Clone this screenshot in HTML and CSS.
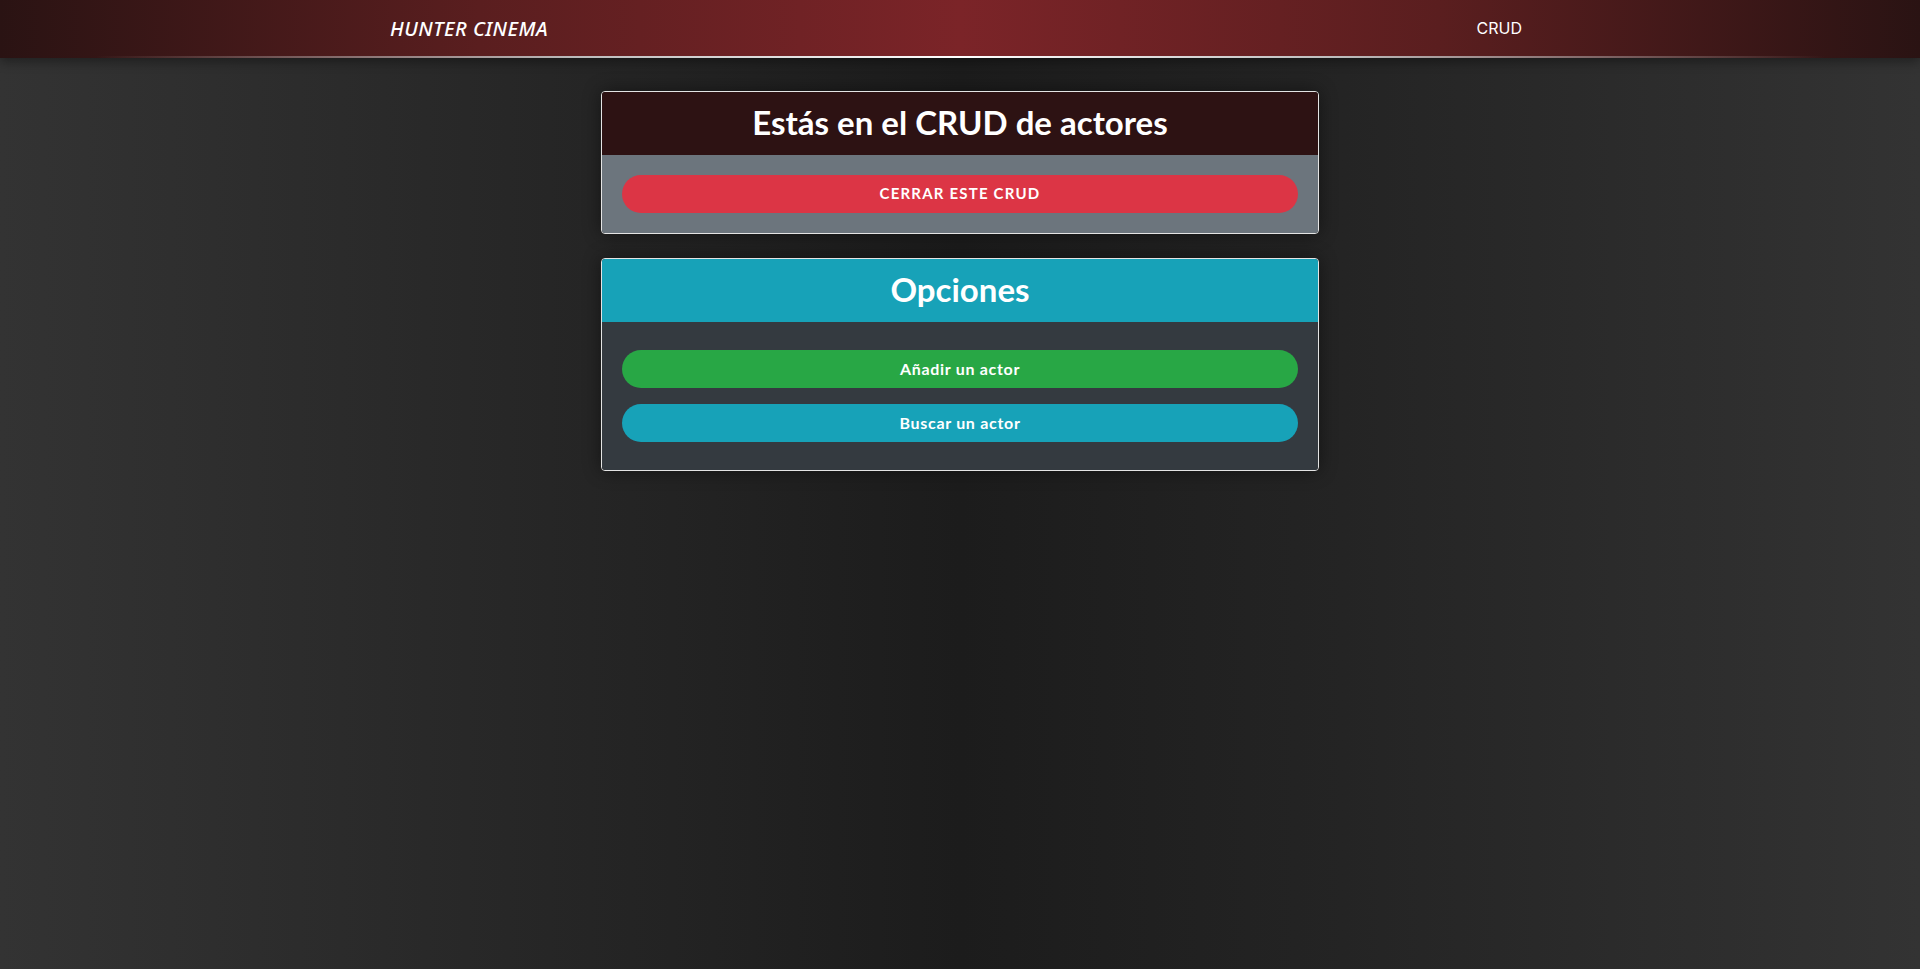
FILE: index.html
```html
<!DOCTYPE html>
<html lang="es">
<head>
<meta charset="utf-8">
<title>Hunter Cinema - CRUD de actores</title>
<link rel="stylesheet" href="styles.css">
</head>
<body>
<header class="navbar">
  <div class="nav-inner">
    <a class="brand" href="#">HUNTER CINEMA</a>
    <a class="nav-link" href="#">CRUD</a>
  </div>
</header>
<main class="content">
  <section class="card card-crud">
    <div class="card-header"><h2 class="card-title">Estás en el CRUD de actores</h2></div>
    <div class="card-body">
      <button class="btn btn-danger btn-upper">Cerrar este CRUD</button>
    </div>
  </section>
  <section class="card card-options">
    <div class="card-header"><h2 class="card-title">Opciones</h2></div>
    <div class="card-body card-body-list">
      <button class="btn btn-success">Añadir un actor</button>
      <button class="btn btn-info">Buscar un actor</button>
    </div>
  </section>
</main>
</body>
</html>
```

FILE: styles.css
```css
* { box-sizing: border-box; }

html, body { margin: 0; padding: 0; }

body {
  min-height: 100vh;
  font-family: "Lato", "Noto Sans", sans-serif;
  color: #fff;
  background: linear-gradient(to right, #333333 0%, #2a2a2a 20%, #1c1c1c 50%, #242424 70%, #333333 100%);
}

.navbar {
  height: 58px;
  background: linear-gradient(to right, #2a1313 0%, #5a1e1f 25%, #7b2428 50%, #5a1e1f 75%, #2a1313 100%);
  border-bottom: 2px solid #ccc;
  border-image: linear-gradient(to right, rgba(255,255,255,0) 5%, #bbb 30%, #fff 50%, #bbb 70%, rgba(255,255,255,0) 95%) 1;
  box-shadow: 0 4px 10px rgba(0,0,0,0.35);
  position: relative;
}

.nav-inner {
  max-width: 1140px;
  height: 56px;
  margin: 0 auto;
  display: flex;
  align-items: center;
  justify-content: space-between;
}

.brand {
  font-family: "Noto Sans", "Open Sans", sans-serif;
  font-style: italic;
  font-weight: 500;
  font-size: 20px;
  color: #fff;
  text-decoration: none;
  letter-spacing: 0.5px;
}

.nav-link {
  font-family: "Inter", "Noto Sans", sans-serif;
  font-size: 16px;
  color: #fff;
  text-decoration: none;
  padding: 0 8px;
}

.content {
  padding-top: 33px;
  display: flex;
  flex-direction: column;
  align-items: center;
  gap: 24px;
}

.card {
  width: 718px;
  border: 1px solid #e4e4e4;
  border-radius: 4px;
  overflow: hidden;
  box-shadow: 0 0 18px rgba(0,0,0,0.45);
}

.card-header {
  height: 63px;
  padding-bottom: 2px;
  display: flex;
  align-items: center;
  justify-content: center;
}

.card-title {
  margin: 0;
  font-family: "Lato", sans-serif;
  font-weight: 700;
  font-size: 33px;
  line-height: 1;
  color: #fff;
}

.card-crud .card-header { background: #2d1213; }
.card-crud .card-body { background: #6c757d; padding: 20px; }

.card-options .card-header { background: #17a2b8; }
.card-options .card-body { background: #343a40; padding: 28px 20px 28px; }

.card-body-list {
  display: flex;
  flex-direction: column;
  gap: 16px;
}

.btn {
  display: block;
  width: 100%;
  height: 38px;
  padding: 0 0 2px;
  border: none;
  border-radius: 19px;
  font-family: "Lato", sans-serif;
  font-weight: 700;
  font-size: 16px;
  letter-spacing: 0.7px;
  color: #fff;
  cursor: pointer;
}

.btn-upper {
  text-transform: uppercase;
  font-size: 15px;
  letter-spacing: 1.2px;
}

.btn-danger { background: #dc3545; }
.btn-success { background: #28a745; }
.btn-info { background: #17a2b8; }
```
